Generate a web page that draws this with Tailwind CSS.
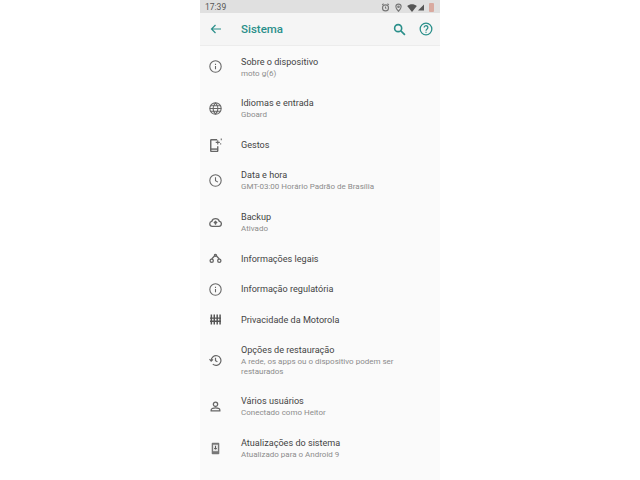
<!DOCTYPE html>
<html lang="en">
<head>
    <meta charset="UTF-8">
    <title>Sistema</title>
    <script src="https://cdn.jsdelivr.net/npm/@tailwindcss/browser@4"></script>
</head>
<body class="bg-white font-['Roboto',sans-serif]">
<div class="w-[240px] h-[480px] mx-auto bg-[#fafafa] overflow-hidden flex flex-col">

    <!-- Status bar -->
    <div class="h-[13px] bg-[#e0e0e0] flex items-center pl-[5px] pr-[6px] text-[#555555] text-[8.500px] shrink-0">
        <span class="translate-y-[1px]">17:39</span>
        <div class="ml-auto flex items-center gap-[4px] translate-y-[1px]">
            <svg class="w-[9px] h-[9px]" viewBox="0 0 24 24" fill="none" stroke="#777777" stroke-width="3"><circle cx="12" cy="13" r="8"/><path d="M12 9v4l2 2M3 5l4-3M21 5l-4-3"/></svg>
            <svg class="w-[9px] h-[9px]" viewBox="0 0 24 24" fill="none" stroke="#777777" stroke-width="3"><path d="M12 22s-7-7-7-12a7 7 0 0 1 14 0c0 5-7 12-7 12z"/><circle cx="12" cy="10" r="2"/></svg>
            <svg class="w-[10px] h-[8px]" viewBox="0 0 24 20" fill="#555555"><path d="M0 5c7-6 17-6 24 0L12 20z"/></svg>
            <svg class="w-[6px] h-[7px] -ml-[3px]" viewBox="0 0 20 20" fill="#555555"><path d="M20 0v20H0z"/></svg>
            <div class="w-[5px] h-[9px] bg-[#d9aaa0] rounded-[1px] ml-[1px]"></div>
        </div>
    </div>

    <!-- App bar -->
    <div class="h-[33px] bg-[#f5f5f5] border-b border-[#ececec] flex items-center shrink-0 text-[#2a8f8a]">
        <div class="w-[41px] pl-[10px] shrink-0">
            <svg class="w-[12px] h-[12px]" viewBox="0 0 24 24" fill="none" stroke="currentColor" stroke-width="2.4"><path d="M22 12H3M11 4l-8 8 8 8"/></svg>
        </div>
        <span class="text-[11.500px] font-medium translate-y-[1px]">Sistema</span>
        <div class="ml-auto flex items-center gap-[13px] pr-[7px]">
            <svg class="w-[13px] h-[13px]" viewBox="0 0 24 24" fill="none" stroke="currentColor" stroke-width="3"><circle cx="9.5" cy="9.5" r="6.5"/><path d="M14.5 14.5 22 22"/></svg>
            <svg class="w-[14px] h-[14px]" viewBox="0 0 24 24" fill="none" stroke="currentColor" stroke-width="2.2"><circle cx="12" cy="12" r="10"/><path d="M8.8 9.5a3.2 3.2 0 1 1 5 2.6c-1 .8-1.8 1.3-1.8 2.9M12 16.5v2"/></svg>
        </div>
    </div>

    <!-- List -->
    <div class="flex flex-col text-[#666666]">
        <div class="h-[41.5px] flex items-center">
            <div class="w-[41px] pl-[9px] shrink-0"><svg class="w-[13px] h-[13px]" viewBox="0 0 24 24" fill="none" stroke="currentColor" stroke-width="2"><circle cx="12" cy="12" r="10.5"/><path d="M12 11v6M12 7v2"/></svg></div>
            <div class="translate-y-[1px]"><div class="text-[9.100px] leading-[12px] text-[#444444]">Sobre o dispositivo</div><div class="text-[8px] leading-[12px] text-[#8c8c8c]">moto g(6)</div></div>
        </div>
        <div class="h-[42px] flex items-center">
            <div class="w-[41px] pl-[9px] shrink-0"><svg class="w-[13px] h-[13px]" viewBox="0 0 24 24" fill="none" stroke="currentColor" stroke-width="2"><circle cx="12" cy="12" r="10.5"/><path d="M1.5 12h21M3 7h18M3 17h18M12 1.5c-6 6-6 15 0 21M12 1.5c6 6 6 15 0 21"/></svg></div>
            <div><div class="text-[9.100px] leading-[12px] text-[#444444]">Idiomas e entrada</div><div class="text-[8px] leading-[12px] text-[#8c8c8c]">Gboard</div></div>
        </div>
        <div class="h-[30.5px] flex items-center">
            <div class="w-[41px] pl-[9px] shrink-0"><svg class="w-[14px] h-[14px]" viewBox="0 0 24 24" fill="none" stroke="currentColor" stroke-width="2.4"><path d="M14 3H4a1 1 0 0 0-1 1v18a1 1 0 0 0 1 1h10a1 1 0 0 0 1-1v-8"/><path d="M3 19h12"/><path d="M15 4v7M11.500 7.500h7M21 1v3M20 9v2" stroke-width="1.800"/></svg></div>
            <div class="text-[9.100px] leading-[12px] text-[#444444]">Gestos</div>
        </div>
        <div class="h-[41.5px] flex items-center">
            <div class="w-[41px] pl-[9px] shrink-0"><svg class="w-[13px] h-[13px]" viewBox="0 0 24 24" fill="none" stroke="currentColor" stroke-width="2"><circle cx="12" cy="12" r="10.5"/><path d="M12 6v6.5l4.5 2.5"/></svg></div>
            <div><div class="text-[9.100px] leading-[12px] text-[#444444]">Data e hora</div><div class="text-[8px] leading-[12px] text-[#8c8c8c]">GMT-03:00 Horário Padrão de Brasília</div></div>
        </div>
        <div class="h-[42px] flex items-center">
            <div class="w-[41px] pl-[9px] shrink-0"><svg class="w-[13px] h-[13px]" viewBox="0 0 24 24" fill="none" stroke="currentColor" stroke-width="2.4"><path d="M6 19a4.500 4.500 0 0 1-1-8.900 7.500 7.500 0 0 1 14.200 0A4.500 4.500 0 0 1 18 19z"/><path d="M12 16v-5M9 13l3-3 3 3"/></svg></div>
            <div><div class="text-[9.100px] leading-[12px] text-[#444444]">Backup</div><div class="text-[8px] leading-[12px] text-[#8c8c8c]">Ativado</div></div>
        </div>
        <div class="h-[30.5px] flex items-center">
            <div class="w-[41px] pl-[9px] shrink-0"><svg class="w-[13px] h-[13px]" viewBox="0 0 24 24" fill="none" stroke="currentColor" stroke-width="2.4"><circle cx="5" cy="16" r="3"/><circle cx="19" cy="16" r="3"/><circle cx="12" cy="6" r="1.800"/><path d="M10.500 7 5 13M13.500 7l5.500 6"/></svg></div>
            <div class="text-[9.100px] leading-[12px] text-[#444444]">Informações legais</div>
        </div>
        <div class="h-[30.5px] flex items-center">
            <div class="w-[41px] pl-[9px] shrink-0"><svg class="w-[13px] h-[13px]" viewBox="0 0 24 24" fill="none" stroke="currentColor" stroke-width="2"><circle cx="12" cy="12" r="10.5"/><path d="M12 11v6M12 7v2"/></svg></div>
            <div class="text-[9.100px] leading-[12px] text-[#444444]">Informação regulatória</div>
        </div>
        <div class="h-[30.5px] flex items-center">
            <div class="w-[41px] pl-[10px] shrink-0"><svg class="w-[11px] h-[11px]" viewBox="0 0 24 24" fill="none" stroke="#555555" stroke-width="3.200"><path d="M3 1v22M9.300 1v22M15.700 1v22M22 1v22M0 9h24M0 16h24"/></svg></div>
            <div class="text-[9.100px] leading-[12px] text-[#444444]">Privacidade da Motorola</div>
        </div>
        <div class="h-[51px] flex items-center">
            <div class="w-[41px] pl-[9px] shrink-0"><svg class="w-[13px] h-[13px]" viewBox="0 0 24 24" fill="none" stroke="currentColor" stroke-width="2.2"><path d="M4 12a9 9 0 1 1 3 6.700"/><path d="M1 9.500 4 13l3.500-3M12 7v5.500l3.500 2"/></svg></div>
            <div class="w-[172px]"><div class="text-[9.100px] leading-[12px] text-[#444444]">Opções de restauração</div><div class="text-[8px] leading-[10.5px] mt-[1px] text-[#8c8c8c]">A rede, os apps ou o dispositivo podem ser restaurados</div></div>
        </div>
        <div class="h-[41.5px] flex items-center">
            <div class="w-[41px] pl-[9px] shrink-0"><svg class="w-[13px] h-[13px]" viewBox="0 0 24 24" fill="none" stroke="currentColor" stroke-width="2.4"><circle cx="12" cy="8" r="4"/><path d="M4 20v-1.500c0-3 5-4 8-4s8 1 8 4V20z"/></svg></div>
            <div><div class="text-[9.100px] leading-[12px] text-[#444444]">Vários usuários</div><div class="text-[8px] leading-[12px] text-[#8c8c8c]">Conectado como Heitor</div></div>
        </div>
        <div class="h-[42px] flex items-center">
            <div class="w-[41px] pl-[9px] shrink-0"><svg class="w-[13px] h-[13px]" viewBox="0 0 24 24"><rect x="5" y="1.500" width="14" height="21" rx="1.500" fill="#777777"/><rect x="7.500" y="5" width="9" height="12" fill="#e6e6e6"/><path d="M12 7v6M9.500 11l2.500 2.500 2.500-2.500" fill="none" stroke="#555555" stroke-width="1.800"/></svg></div>
            <div><div class="text-[9.100px] leading-[12px] text-[#444444]">Atualizações do sistema</div><div class="text-[8px] leading-[12px] text-[#8c8c8c]">Atualizado para o Android 9</div></div>
        </div>
    </div>
</div>
</body>
</html>
